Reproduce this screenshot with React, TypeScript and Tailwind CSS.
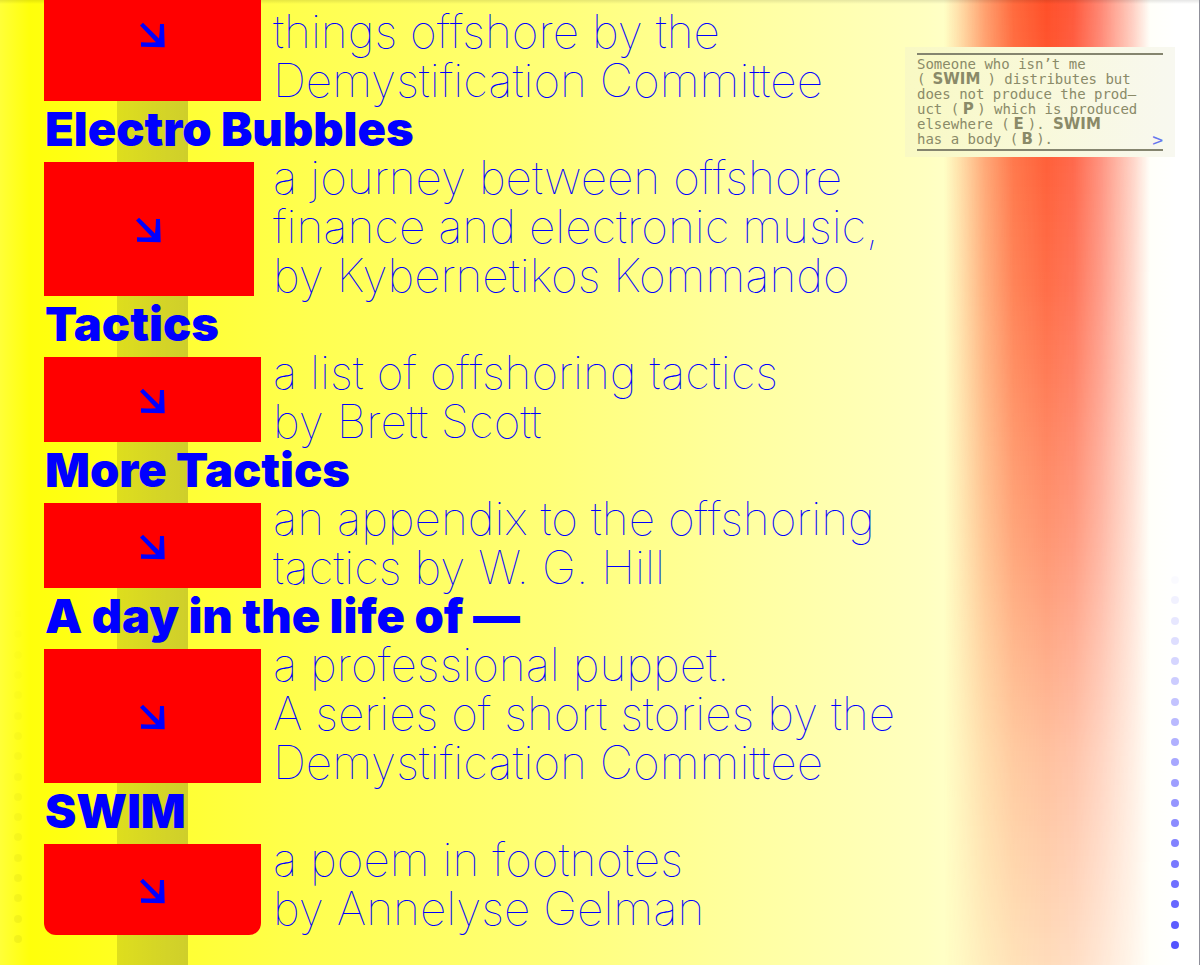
type Entry = {
  title?: string;
  lines: string[];
  box: string;
};

const entries: Entry[] = [
  {
    lines: ["things offshore by the", "Demystification Committee"],
    box: "w-[217px] -mt-10 mb-1",
  },
  {
    title: "Electro Bubbles",
    lines: ["a journey between offshore", "finance and electronic music,", "by Kybernetikos Kommando"],
    box: "w-[210px] mt-[9px] mb-1",
  },
  {
    title: "Tactics",
    lines: ["a list of offshoring tactics", "by Brett Scott"],
    box: "w-[217px] mt-[9px] mb-1",
  },
  {
    title: "More Tactics",
    lines: ["an appendix to the offshoring", "tactics by W. G. Hill"],
    box: "w-[217px] mt-[9px] mb-1",
  },
  {
    title: "A day in the life of —",
    lines: ["a professional puppet.", "A series of short stories by the", "Demystification Committee"],
    box: "w-[217px] mt-[9px] mb-1",
  },
  {
    title: "SWIM",
    lines: ["a poem in footnotes", "by Annelyse Gelman"],
    box: "w-[217px] mt-[9px] -mb-0.5 rounded-b-xl",
  },
];

function Arrow() {
  return (
    <svg viewBox="1 0 26 26" className="size-[26px] fill-[#0000ff]" aria-hidden="true">
      <path d="M4 .7 L20 16.6 Q20.9 9 21 2 H25 L25.7 25.2 L2 24.8 V20.3 Q9 20.6 17 20.2 L1 3.5 Z" />
    </svg>
  );
}

function EntryRow({ title, lines, box }: Entry) {
  return (
    <section>
      {title && <h2 className="pl-px text-[47px] leading-[48px] font-black">{title}</h2>}
      <div className="flex">
        <div className="flex w-[229px] shrink-0">
          <a
            href="#"
            aria-label={title ?? "Demystification Committee"}
            className={`flex items-center justify-center bg-[#ff0000] pt-0.5 ${box}`}
          >
            <Arrow />
          </a>
        </div>
        <p className="text-[46px] leading-[49px] font-thin whitespace-nowrap">
          {lines.map((line) => (
            <span key={line} className="block">
              {line}
            </span>
          ))}
        </p>
      </div>
    </section>
  );
}

function Wide({ text, width }: { text: string; width: string }) {
  return (
    <b className={`inline-block font-['DejaVu_Sans',sans-serif] text-[15px] leading-[14px] ${width}`}>
      {text}
    </b>
  );
}

function Note() {
  return (
    <aside className="absolute top-[47px] right-[25px] w-[270px] bg-linear-to-r from-[#f9f9c3] to-[#f8f8f0] px-3 py-1.5 text-[#8a8a68]">
      <div className="relative grid auto-rows-[15px] border-y-2 border-[#85856f] py-0.5 font-['DejaVu_Sans_Mono',monospace] text-[14px] leading-[15px] whitespace-nowrap">
        <div>Someone who isn’t me</div>
        <div>
          (<Wide text="SWIM" width="w-[62px] text-center" />) distributes but
        </div>
        <div>does not produce the prod–</div>
        <div>
          uct (<Wide text="P" width="w-[18px] text-center" />) which is produced
        </div>
        <div>
          elsewhere (<Wide text="E" width="w-[18px] text-center" />). <Wide text="SWIM" width="w-[62px]" />
        </div>
        <div>
          has a body (<Wide text="B" width="w-[18px] text-center" />).
        </div>
        <a href="#" aria-label="Next footnote" className="absolute right-0 bottom-0.5 text-[18px] text-[#6677ee]">
          &gt;
        </a>
      </div>
    </aside>
  );
}

const rightDots = Array.from({ length: 19 }, (_, i) => 0.02 + (i / 18) * 0.65);
const leftDots = Array.from({ length: 17 }, (_, i) => 0.005 + (i / 16) * 0.045);

export default function App() {
  return (
    <main className="relative min-h-screen overflow-hidden bg-[linear-gradient(90deg,#ffff38_0%,#ffff0a_2.5%,#ffff14_6%,#ffff30_14%,#ffff50_26%,#ffff78_46%,#ffffa0_62%,#ffffc0_77%,#ffffca_80%,#fffff4_94%,#ffffff_98%)] font-['Inter',sans-serif] text-[#0000ff]">
      <div className="absolute inset-y-0 left-[117px] w-[71px] bg-linear-to-r from-black/13 to-black/19" />
      <div className="absolute inset-y-0 right-[50px] w-[206px] bg-[linear-gradient(90deg,rgba(255,75,20,0)_0%,rgba(255,75,20,.22)_8%,rgba(255,72,20,.58)_20%,rgba(255,66,20,.88)_34%,#ff3c14_50%,rgba(255,60,30,.94)_63%,rgba(255,60,40,.68)_76%,rgba(255,60,40,.26)_92%,rgba(255,60,40,0)_100%)] mask-[linear-gradient(180deg,rgba(0,0,0,.9),rgba(0,0,0,.74)_30%,rgba(0,0,0,.53)_57%,rgba(0,0,0,.32)_78%,rgba(0,0,0,.18))]" />
      <div className="absolute inset-x-0 top-0 h-1 bg-linear-to-b from-black/10 to-transparent" />
      <div className="absolute top-[610px] bottom-[22px] left-3.5 flex flex-col justify-between">
        {leftDots.map((opacity, i) => (
          <span key={i} className="size-2 rounded-full bg-black" style={{ opacity }} />
        ))}
      </div>
      <div className="absolute top-[576px] right-[21px] bottom-4 flex flex-col justify-between">
        {rightDots.map((opacity, i) => (
          <span key={i} className="size-2 rounded-full bg-[#0000ff]" style={{ opacity }} />
        ))}
      </div>
      <div className="absolute inset-y-0 right-0 w-px bg-[#8f8f9a]" />
      <div className="relative pt-[7px] pb-6 pl-11">
        {entries.map((entry) => (
          <EntryRow key={entry.title ?? "intro"} {...entry} />
        ))}
      </div>
      <Note />
    </main>
  );
}
